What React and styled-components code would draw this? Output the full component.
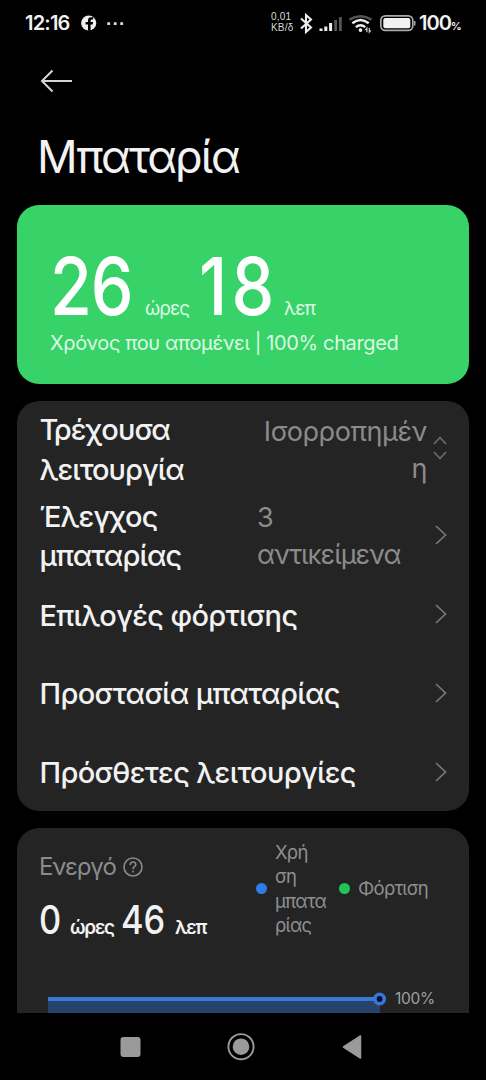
import React from 'react';
import styled, { createGlobalStyle } from 'styled-components';

const GlobalStyle = createGlobalStyle`
  * {
    box-sizing: border-box;
  }
  body {
    margin: 0;
    background: #000;
    font-family: Inter, "Noto Sans", sans-serif;
    color: #f2f2f2;
  }
  svg {
    flex: none;
  }
`

const Screen = styled.div`
  display: flex;
  flex-direction: column;
  width: 486px;
  height: 1080px;
  overflow: hidden;
  background: #000;
`

const StatusBar = styled.div`
  display: flex;
  align-items: center;
  justify-content: space-between;
  flex: none;
  height: 45px;
  padding: 0 24px 0 25px;
`

const StatusGroup = styled.div`
  display: flex;
  align-items: center;
  height: 100%;
`

const Clock = styled.span`
  width: 56px;
  font-size: 20px;
  font-weight: 600;
  letter-spacing: -0.8px;
`

const Speed = styled.div`
  display: flex;
  flex-direction: column;
  width: 28px;
  font-family: "Liberation Sans", sans-serif;
  font-size: 10px;
  line-height: 10.5px;
  letter-spacing: 0.2px;
  color: #d8d8d8;
`

const Percent = styled.span`
  width: 43px;
  font-size: 20px;
  font-weight: 600;
  letter-spacing: -1px;
  white-space: nowrap;

  small {
    font-size: 11px;
    letter-spacing: 0;
  }
`

const Header = styled.header`
  flex: none;
  height: 160px;
  padding: 24px 37px 0;
`

const BackIcon = styled.svg`
  display: block;
  margin-left: 3px;
`

const Title = styled.h1`
  margin: 34px 0 0;
  font-size: 45px;
  line-height: 60px;
  font-weight: 400;
  letter-spacing: -2px;
`

const Main = styled.main`
  display: flex;
  flex-direction: column;
  gap: 17px;
  height: 808px;
  padding: 0 17px;
  overflow: hidden;
`

const Card = styled.section`
  flex: none;
  border-radius: 22px;
  background: #242424;
`

const TimeCard = styled(Card)`
  height: 179px;
  padding: 42px 33px 0;
  background: #38d368;
  color: #fff;
`

const Duration = styled.div`
  display: flex;
  align-items: baseline;
  height: 78px;
  line-height: 78px;
  white-space: nowrap;
`

// Digits are condensed, the units next to them are not
const BigNumber = styled.span`
  width: ${props => props.width}px;
  font-size: 80px;
  font-weight: 500;
  letter-spacing: ${props => props.spacing}px;
  transform: scaleX(0.85);
  transform-origin: 0 50%;
`

const BigUnit = styled.span`
  width: ${props => props.width}px;
  font-size: 19px;
  letter-spacing: -1px;
  color: #dcf8e4;
`

const Remaining = styled.p`
  margin: 4px 0 0;
  font-size: 20px;
  line-height: 28px;
  letter-spacing: -0.38px;
  color: #dcf8e4;
  white-space: nowrap;
`

const Row = styled.div`
  display: flex;
  align-items: center;
  height: ${props => props.tall ? 94.5 : 78.9}px;
  padding: 0 22px 0 22.5px;
`

const Label = styled.div`
  flex: 1;
  padding-top: 3px;
  font-size: 29px;
  line-height: 39.5px;
  font-weight: 450;
  letter-spacing: ${props => props.spacing || -0.65}px;
  white-space: nowrap;
`

const Value = styled.div`
  width: ${props => props.width}px;
  margin-right: ${props => props.gap}px;
  padding-top: 3px;
  font-size: 27px;
  line-height: 37px;
  letter-spacing: ${props => props.spacing || -0.4}px;
  text-align: ${props => props.align || 'left'};
  color: #8b8b8b;
  white-space: nowrap;
`

const UsageCard = styled(Card)`
  height: 260px;
`

const UsageHead = styled.div`
  display: flex;
  height: 160px;
  padding: 0 22px;
`

const Active = styled.div`
  flex: none;
  width: 217px;
  padding-top: 23px;
`

const ActiveLabel = styled.div`
  display: flex;
  align-items: center;
  gap: 7px;
  font-size: 24px;
  line-height: 32px;
  letter-spacing: -1.2px;
  color: #8b8b8b;
`

const ActiveTime = styled.div`
  display: flex;
  align-items: baseline;
  height: 50px;
  margin-top: 12px;
  line-height: 50px;
  white-space: nowrap;
`

const ActiveNumber = styled.span`
  width: ${props => props.width}px;
  font-size: 40px;
  font-weight: 550;
  letter-spacing: 0;
  transform: scaleX(0.86);
  transform-origin: 0 50%;
`

const ActiveUnit = styled.span`
  width: ${props => props.width}px;
  font-size: 19px;
  font-weight: 600;
  letter-spacing: -1.3px;
`

const Legend = styled.div`
  display: flex;
  align-items: center;
  height: 97px;
  margin-top: 12px;
  font-size: 18.5px;
  line-height: 24.3px;
  letter-spacing: -0.75px;
  color: #8f8f8f;
  white-space: nowrap;
`

const LegendText = styled.span`
  flex: none;
  width: ${props => props.width}px;
  margin-left: 8px;
`

const Dot = styled.i`
  flex: none;
  width: 11px;
  height: 11px;
  border-radius: 50%;
  background: ${props => props.color};
`

const Chart = styled.div`
  display: flex;
  padding-left: 31px;
`

const ChartLabel = styled.span`
  margin: 1px 0 0 8px;
  font-size: 15.5px;
  line-height: 20px;
  letter-spacing: -0.3px;
  color: #a0a0a0;
`

const NavBar = styled.nav`
  flex: none;
  height: 67px;
`

const Chevron = () => (
  <svg width="12" height="20" viewBox="0 0 12 20" fill="none" stroke="#787878" strokeWidth="1.7">
    <path d="M1 1l9.5 9L1 19" />
  </svg>
)

const UpDown = () => (
  <svg width="14" height="24" viewBox="0 0 14 24" fill="none" stroke="#6c6c6c" strokeWidth="1.7">
    <path d="M1 8l6-6.5L13 8M1 16l6 6.5L13 16" />
  </svg>
)

const StatusIcons = () => (
  <svg width="120" height="24" viewBox="299 10 120 24" fill="none">
    <path d="M301 17.5l10 9-5 4.5V14l5 4.5-10 9" stroke="#eee" strokeWidth="2.1" />
    <path d="M321 27.5v2.5M325.8 25.5v4.5M330.6 22v8" stroke="#eee" strokeWidth="3" />
    <path d="M335.6 19v11M340.4 16v14" stroke="#555" strokeWidth="2.8" />
    <path d="M349.5 18.6q11-6.600 22 0" stroke="#555" strokeWidth="2.6" />
    <path d="M352.3 22.3q8.2-6.600 16.400 0M355.8 26.2q4.700-4 9.400 0" stroke="#eee" strokeWidth="2.4" />
    <circle cx="360.5" cy="29.1" r="1.9" fill="#eee" />
    <path d="M366.9 31.2v-4l-1.500 1.800M369.3 27v4.200l1.500-1.800" stroke="#ccc" strokeWidth="1.2" />
    <rect x="380.8" y="14.8" width="32" height="14.6" rx="4.6" stroke="#aaa" strokeWidth="1.7" />
    <rect x="383.3" y="17" width="27" height="10.2" rx="2" fill="#f2f2f2" />
    <path d="M414.7 20v4.500" stroke="#aaa" strokeWidth="1.5" />
  </svg>
)

export default () => {
  return (
    <Screen>
      <GlobalStyle />
      <StatusBar>
        <StatusGroup>
          <Clock>12:16</Clock>
          <svg width="46" height="16" viewBox="81 14 46 16">
            <circle cx="88.7" cy="22" r="7.6" fill="#eee" />
            <path d="M88 29.8v-6.3h-2.4V21H88v-1.6q0-3.2 3.2-3.2h2v2.3h-1.4q-1.2 0-1.2 1.2V21h2.5l-.4 2.5h-2.1v6.3z" fill="#000" />
            <path d="M107.3 21.3h2.8v2.6h-2.8zM113.8 21.3h2.8v2.6h-2.8zM120.3 21.3h2.8v2.6h-2.8z" fill="#ddd" />
          </svg>
        </StatusGroup>
        <StatusGroup>
          <Speed>
            <span>0,01</span>
            <span>KB/δ</span>
          </Speed>
          <StatusIcons />
          <Percent>100<small>%</small></Percent>
        </StatusGroup>
      </StatusBar>
      <Header>
        <BackIcon width="33" height="24" viewBox="0 0 33 24" fill="none" stroke="#d4d4d4" strokeWidth="2">
          <path d="M32 12H2M12.5 1.5L2 12l10.5 10.5" />
        </BackIcon>
        <Title>Μπαταρία</Title>
      </Header>
      <Main>
        <TimeCard>
          <Duration>
            <BigNumber width={95} spacing={-1.5}>26</BigNumber>
            <BigUnit width={54}>ώρες</BigUnit>
            <BigNumber width={85} spacing={5}>18</BigNumber>
            <BigUnit width={40}>λεπ</BigUnit>
          </Duration>
          <Remaining>Χρόνος που απομένει | 100% charged</Remaining>
        </TimeCard>
        <Card>
          <Row tall>
            <Label spacing={-0.95}>Τρέχουσα<br />λειτουργία</Label>
            <Value width={170} gap={6} align="right">Ισορροπημέν<br />η</Value>
            <UpDown />
          </Row>
          <Row>
            <Label spacing={-0.9}>Έλεγχος<br />μπαταρίας</Label>
            <Value width={150} gap={28} spacing={-0.95}>3<br />αντικείμενα</Value>
            <Chevron />
          </Row>
          <Row>
            <Label>Επιλογές φόρτισης</Label>
            <Chevron />
          </Row>
          <Row>
            <Label>Προστασία μπαταρίας</Label>
            <Chevron />
          </Row>
          <Row>
            <Label>Πρόσθετες λειτουργίες</Label>
            <Chevron />
          </Row>
        </Card>
        <UsageCard>
          <UsageHead>
            <Active>
              <ActiveLabel>
                Ενεργό
                <svg width="20" height="20" viewBox="0 0 20 20" fill="none" stroke="#8b8b8b" strokeWidth="1.6">
                  <circle cx="10" cy="10" r="9" />
                  <path d="M7.2 8q0-3 2.8-3t2.8 2.6q0 1.4-1.6 2.3Q10 10.7 10 12.2M10 13.7v1.8" />
                </svg>
              </ActiveLabel>
              <ActiveTime>
                <ActiveNumber width={31}>0</ActiveNumber>
                <ActiveUnit width={51}>ώρες</ActiveUnit>
                <ActiveNumber width={54}>46</ActiveNumber>
                <ActiveUnit width={34}>λεπ</ActiveUnit>
              </ActiveTime>
            </Active>
            <Legend>
              <Dot color="#2f7bea" />
              <LegendText width={64}>Χρή<br />ση<br />μπατα<br />ρίας</LegendText>
              <Dot color="#20c35a" />
              <LegendText width={72}>Φόρτιση</LegendText>
            </Legend>
          </UsageHead>
          <Chart>
            <svg width="339" height="30" viewBox="48 988 339 30">
              <path d="M48 999h332v19H48z" fill="#27436b" />
              <path d="M48 999h332" stroke="#3978d6" strokeWidth="4" />
              <circle cx="379.6" cy="999" r="4.7" fill="#060b33" stroke="#3978d6" strokeWidth="3.6" />
            </svg>
            <ChartLabel>100%</ChartLabel>
          </Chart>
        </UsageCard>
      </Main>
      <NavBar>
        <svg width="486" height="67" viewBox="0 1013 486 67" fill="none">
          <rect x="120.5" y="1037" width="20" height="20" rx="3" fill="#9a9a9a" />
          <circle cx="241" cy="1046.7" r="12.6" stroke="#9a9a9a" strokeWidth="1.9" />
          <circle cx="241" cy="1046.7" r="8.3" fill="#9a9a9a" />
          <path d="M343.5 1047l17-11v22z" fill="#9a9a9a" stroke="#9a9a9a" strokeWidth="1.5" strokeLinejoin="round" />
        </svg>
      </NavBar>
    </Screen>
  )
}
